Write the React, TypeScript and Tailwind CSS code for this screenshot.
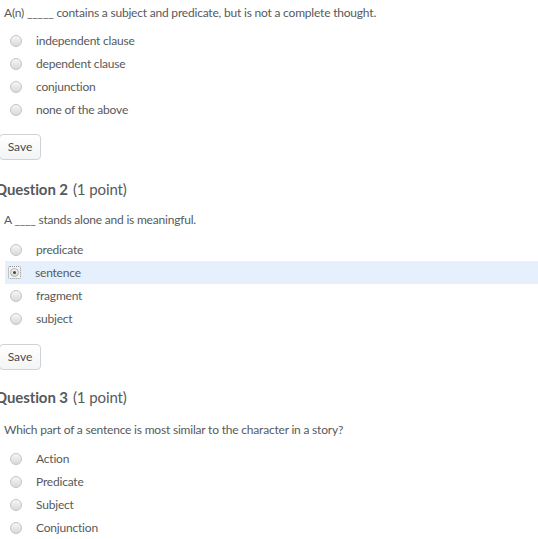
import React from 'react';

type Question = {
  num?: number;
  prompt: string;
  options: string[];
  selected?: number;
  save: boolean;
};

const questions: Question[] = [
  {
    prompt: 'A(n) _____ contains a subject and predicate, but is not a complete thought.',
    options: ['independent clause', 'dependent clause', 'conjunction', 'none of the above'],
    save: true,
  },
  {
    num: 2,
    prompt: 'A ____ stands alone and is meaningful.',
    options: ['predicate', 'sentence', 'fragment', 'subject'],
    selected: 1,
    save: true,
  },
  {
    num: 3,
    prompt: 'Which part of a sentence is most similar to the character in a story?',
    options: ['Action', 'Predicate', 'Subject', 'Conjunction'],
    save: false,
  },
];

function Radio({ checked }: { checked?: boolean }) {
  if (checked) {
    return (
      <span className="flex h-[13px] w-[13px] items-center justify-center rounded-[2px] border border-dotted border-[#8c8c8c] bg-[#f4f4f4]">
        <span className="flex h-[9px] w-[9px] items-center justify-center rounded-full border border-[#b0b0b0] bg-gradient-to-b from-[#f2f2f2] to-[#dcdcdc]">
          <span className="h-[3px] w-[3px] rounded-full bg-[#444]" />
        </span>
      </span>
    );
  }
  return (
    <span className="h-[12px] w-[12px] rounded-full border border-[#c4c4c4] bg-gradient-to-b from-[#f6f6f6] to-[#d9d9d9]" />
  );
}

function QuestionBlock({ q, first }: { q: Question; first?: boolean }) {
  return (
    <div>
      {q.num && (
        <div
          className={
            (q.num === 2 ? 'mt-[19px]' : 'mt-[17px]') +
            ' -ml-[5px] flex h-[20px] items-center text-[15px] tracking-[-0.1px] text-[#565a5c]'
          }
        >
          <span className="font-bold">Question {q.num}</span>
          <span className="ml-[5px]">(1 point)</span>
        </div>
      )}
      <div
        className={
          first
            ? 'flex h-[26px] items-center pl-[4px]'
            : q.num === 2
              ? 'mt-[11px] flex h-[20px] items-center pl-[4px]'
              : 'mt-[13px] flex h-[20px] items-center pl-[4px]'
        }
      >
        {q.prompt}
      </div>
      <div className={first ? 'mt-[3px]' : q.num === 2 ? 'mt-[8px]' : 'mt-[7px]'}>
        {q.options.map((opt, i) => (
          <div
            key={opt}
            className={
              i === q.selected
                ? 'ml-[5px] flex h-[23px] items-center bg-[#e6f0fc] pl-[3px]'
                : 'ml-[5px] flex h-[23px] items-center pl-[4px]'
            }
          >
            <span className="flex w-[13px] justify-center">
              <Radio checked={i === q.selected} />
            </span>
            <span className="ml-[14px]">{opt}</span>
          </div>
        ))}
      </div>
      {q.save && (
        <button
          className={
            (first ? 'mt-[13px]' : 'mt-[14px]') +
            ' -ml-[1px] block h-[26px] w-[42px] rounded-[4px] border border-[#cfd3d8] bg-gradient-to-b from-white to-[#f3f4f5] text-[12px] tracking-normal text-[#494c4e]'
          }
        >
          Save
        </button>
      )}
    </div>
  );
}

export default function App() {
  return (
    <div
      className="h-[539px] w-[538px] overflow-hidden bg-white text-[12px] tracking-[-0.2px] text-[#565a5c]"
      style={{ fontFamily: 'Lato, "Open Sans", sans-serif' }}
    >
      {questions.map((q, i) => (
        <QuestionBlock key={i} q={q} first={i === 0} />
      ))}
    </div>
  );
}
